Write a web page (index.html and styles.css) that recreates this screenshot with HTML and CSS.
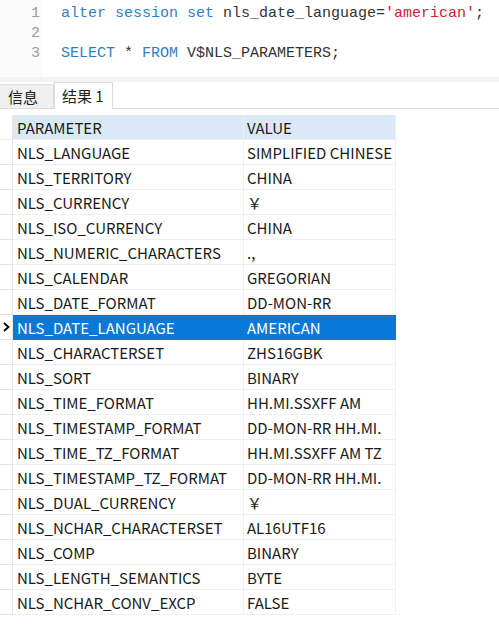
FILE: index.html
```html
<!DOCTYPE html>
<html>
<head>
<meta charset="utf-8">
<link rel="stylesheet" href="styles.css">
</head>
<body>
<div class="editor">
  <div class="gutter">
    <div class="ln">1</div>
    <div class="ln">2</div>
    <div class="ln">3</div>
  </div>
  <div class="code">
    <div class="line"><span class="kw">alter session set</span> nls_date_language=<span class="str">'american'</span>;</div>
    <div class="line">&nbsp;</div>
    <div class="line"><span class="kw">SELECT</span> * <span class="kw">FROM</span> V$NLS_PARAMETERS;</div>
  </div>
</div>
<div class="sep"></div>
<div class="tabs">
  <div class="tab">信息</div>
  <div class="tab active">结果 1</div>
  <div class="tab-rest"></div>
</div>
<div class="grid">
  <div class="row head"><div class="ind"></div><div class="c1">PARAMETER</div><div class="c2">VALUE</div></div>
  <div class="row"><div class="ind"></div><div class="c1">NLS_LANGUAGE</div><div class="c2">SIMPLIFIED CHINESE</div></div>
  <div class="row"><div class="ind"></div><div class="c1">NLS_TERRITORY</div><div class="c2">CHINA</div></div>
  <div class="row"><div class="ind"></div><div class="c1">NLS_CURRENCY</div><div class="c2">￥</div></div>
  <div class="row"><div class="ind"></div><div class="c1">NLS_ISO_CURRENCY</div><div class="c2">CHINA</div></div>
  <div class="row"><div class="ind"></div><div class="c1">NLS_NUMERIC_CHARACTERS</div><div class="c2">.,</div></div>
  <div class="row"><div class="ind"></div><div class="c1">NLS_CALENDAR</div><div class="c2">GREGORIAN</div></div>
  <div class="row"><div class="ind"></div><div class="c1">NLS_DATE_FORMAT</div><div class="c2">DD-MON-RR</div></div>
  <div class="row sel"><div class="ind"><svg width="7" height="10" viewBox="0 0 7 10"><path d="M1 1 L5.5 5 L1 9" fill="none" stroke="#000" stroke-width="1.8"/></svg></div><div class="c1">NLS_DATE_LANGUAGE</div><div class="c2">AMERICAN</div></div>
  <div class="row"><div class="ind"></div><div class="c1">NLS_CHARACTERSET</div><div class="c2">ZHS16GBK</div></div>
  <div class="row"><div class="ind"></div><div class="c1">NLS_SORT</div><div class="c2">BINARY</div></div>
  <div class="row"><div class="ind"></div><div class="c1">NLS_TIME_FORMAT</div><div class="c2">HH.MI.SSXFF AM</div></div>
  <div class="row"><div class="ind"></div><div class="c1">NLS_TIMESTAMP_FORMAT</div><div class="c2">DD-MON-RR HH.MI.</div></div>
  <div class="row"><div class="ind"></div><div class="c1">NLS_TIME_TZ_FORMAT</div><div class="c2">HH.MI.SSXFF AM TZ</div></div>
  <div class="row"><div class="ind"></div><div class="c1">NLS_TIMESTAMP_TZ_FORMAT</div><div class="c2">DD-MON-RR HH.MI.</div></div>
  <div class="row"><div class="ind"></div><div class="c1">NLS_DUAL_CURRENCY</div><div class="c2">￥</div></div>
  <div class="row"><div class="ind"></div><div class="c1">NLS_NCHAR_CHARACTERSET</div><div class="c2">AL16UTF16</div></div>
  <div class="row"><div class="ind"></div><div class="c1">NLS_COMP</div><div class="c2">BINARY</div></div>
  <div class="row"><div class="ind"></div><div class="c1">NLS_LENGTH_SEMANTICS</div><div class="c2">BYTE</div></div>
  <div class="row"><div class="ind"></div><div class="c1">NLS_NCHAR_CONV_EXCP</div><div class="c2">FALSE</div></div>
</div>
</body>
</html>
```
FILE: styles.css
```css
html, body {
  margin: 0;
  padding: 0;
  background: #ffffff;
}
body {
  width: 499px;
  height: 644px;
  overflow: hidden;
}
.editor {
  display: flex;
  height: 77px;
  background: #ffffff;
  box-sizing: border-box;
  padding-top: 4px;
}
.gutter {
  width: 42px;
  margin-top: -4px;
  padding-top: 4px;
  background: #fbfbfb;
  box-sizing: border-box;
}
.ln {
  height: 20px;
  line-height: 20px;
  text-align: right;
  padding-right: 2px;
  font-family: "Liberation Mono", monospace;
  font-size: 15px;
  color: #9a9a9a;
}
.code {
  padding-left: 19px;
  font-family: "Liberation Mono", monospace;
  font-size: 15px;
  color: #333333;
}
.line {
  height: 20px;
  line-height: 20px;
  white-space: pre;
}
.kw { color: #2f7fc8; }
.str { color: #d0213e; }
.sep {
  height: 5px;
  background: #f3f3f3;
}
.tabs {
  display: flex;
  height: 27px;
  font-family: "Noto Sans CJK SC", sans-serif;
  font-size: 15px;
  color: #222222;
}
.tab {
  box-sizing: border-box;
  padding: 0 6px;
  line-height: 24px;
  border-bottom: 1px solid #dcdcdc;
}
.tab:first-child {
  width: 54px;
  margin-top: 2px;
  background: #efefef;
  border-top: 1px solid #e0e0e0;
  border-right: 1px solid #e0e0e0;
  padding-left: 8px;
}
.tab.active {
  width: 59px;
  background: #ffffff;
  border: 1px solid #dcdcdc;
  border-bottom: none;
  padding-left: 7px;
  line-height: 26px;
}
.tab-rest {
  flex: 1;
  border-bottom: 1px solid #dcdcdc;
}
.grid {
  margin-top: 6px;
  font-family: "Noto Sans CJK SC", sans-serif;
  font-size: 15px;
  color: #1a1a1a;
}
.row {
  display: flex;
  height: 25px;
  line-height: 25px;
}
.ind {
  width: 13px;
  box-sizing: border-box;
  border-bottom: 1px solid #e2e2e2;
  border-right: 1px solid #e6e6e6;
  display: flex;
  align-items: center;
  padding-left: 3px;
}
.head .ind {
  border-bottom: 1px solid #eeeeee;
}
.c1, .c2 {
  box-sizing: border-box;
  padding-left: 4px;
  border-bottom: 1px solid #f0f0f0;
  white-space: nowrap;
  overflow: hidden;
}
.c1 {
  width: 231px;
  border-right: 1px solid #f0f0f0;
}
.c2 {
  width: 152px;
  border-right: 1px solid #f0f0f0;
  padding-left: 3px;
}
.head .c1, .head .c2 {
  background: #dbe9f7;
  border-color: #e8f0f8;
}
.sel .c1, .sel .c2 {
  background: #0a78d7;
  color: #ffffff;
  border-color: #0a78d7;
}
```
